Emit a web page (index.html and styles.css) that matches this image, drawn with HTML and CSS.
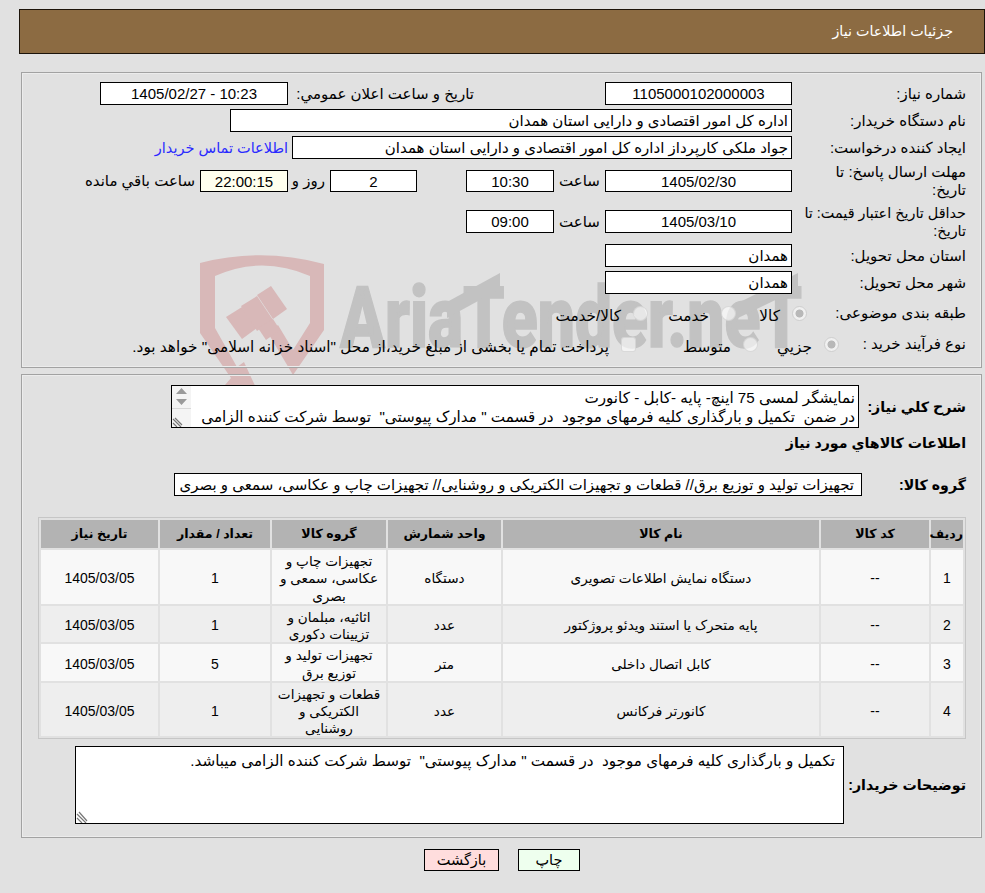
FILE: index.html
```html
<!DOCTYPE html>
<html lang="fa" dir="rtl">
<head>
<meta charset="utf-8">
<title>جزئیات اطلاعات نیاز</title>
<link rel="stylesheet" href="styles.css">
</head>
<body>
<svg class="watermark" width="985" height="893" viewBox="0 0 985 893" aria-hidden="true">
  <path class="wm-red" d="M200 263 Q262 247 324 264 L324 330 L293 375 L268 333 L278 325 L293 350 L310 323 L310 276 Q262 255 215 276 L215 328 L237 367 L244 362 L257 390 L225 385 L231 378 L200 333 Z"/>
  <polygon class="wm-red" points="226,317 242,307 257,328 242,339"/>
  <polygon class="wm-red" points="241,306 257,296 273,320 257,331"/>
  <polygon class="wm-red" points="257,295 271,286 287,309 273,319"/>
  <polygon class="wm-red" points="258,328 273,319 280,330 266,340"/>
  <text class="wm-text" x="340" y="347" textLength="462" lengthAdjust="spacingAndGlyphs" direction="ltr">AriaTender.neT</text>
  <polygon class="wm-gray" points="447,302 500,273 500,289 447,318"/>
  <polygon class="wm-gray" points="738,303 798,273 798,289 738,318"/>
</svg>

<header class="page-title">جزئیات اطلاعات نیاز</header>

<section class="panel panel-info">
  <div class="row r-23">
    <span class="label w-174">شماره نیاز:</span>
    <span class="field w-187 center">1105000102000003</span>
    <span class="text ms-131 w-186">تاریخ و ساعت اعلان عمومي:</span>
    <span class="field w-188 center">10:23 - 1405/02/27</span>
  </div>
  <div class="row r-23">
    <span class="label w-174">نام دستگاه خریدار:</span>
    <span class="field w-562">اداره کل امور اقتصادی و دارایی استان همدان</span>
  </div>
  <div class="row r-23">
    <span class="label w-174">ایجاد کننده درخواست:</span>
    <span class="field w-500">جواد ملکی کارپرداز اداره کل امور اقتصادی و دارایی استان همدان</span>
    <a class="link" href="#">اطلاعات تماس خریدار</a>
  </div>
  <div class="row r-36">
    <span class="label w-174">مهلت ارسال پاسخ: تا<br>تاریخ:</span>
    <span class="field w-187 h-22 center">1405/02/30</span>
    <span class="text w-51 center">ساعت</span>
    <span class="field w-88 h-22 center">10:30</span>
    <span class="field w-87 h-22 center ms-49">2</span>
    <span class="text ms-5 w-37">روز و</span>
    <span class="field w-88 h-22 center timer">22:00:15</span>
    <span class="text ms-5">ساعت باقي مانده</span>
  </div>
  <div class="row r-37">
    <span class="label label-tight w-174">حداقل تاریخ اعتبار قیمت: تا<br>تاریخ:</span>
    <span class="field w-187 center">1405/03/10</span>
    <span class="text w-51 center">ساعت</span>
    <span class="field w-88 center">09:00</span>
  </div>
  <div class="row r-23">
    <span class="label w-174">استان محل تحویل:</span>
    <span class="field w-187">همدان</span>
  </div>
  <div class="row r-23">
    <span class="label w-174">شهر محل تحویل:</span>
    <span class="field w-187">همدان</span>
  </div>
  <div class="row r-30">
    <span class="label w-159">طبقه بندی موضوعی:</span>
    <label class="option w-71"><input class="radio" type="radio" name="cat" disabled checked><span class="opt-text">کالا</span></label>
    <label class="option w-88"><input class="radio" type="radio" name="cat" disabled><span class="opt-text">خدمت</span></label>
    <label class="option"><input class="radio" type="radio" name="cat" disabled><span class="opt-text">کالا/خدمت</span></label>
  </div>
  <div class="row r-24">
    <span class="label w-127">نوع فرآیند خرید :</span>
    <label class="option w-81"><input class="radio" type="radio" name="kind" disabled checked><span class="opt-text">جزيي</span></label>
    <label class="option w-122"><input class="radio" type="radio" name="kind" disabled><span class="opt-text">متوسط</span></label>
    <label class="option"><input class="check" type="checkbox" disabled><span class="opt-text">پرداخت تمام یا بخشی از مبلغ خرید،از محل "اسناد خزانه اسلامی" خواهد بود.</span></label>
  </div>
</section>

<section class="panel panel-goods">
  <div class="row-desc">
    <span class="label-bold w-107">شرح كلي نياز:</span>
    <div class="area area-short">
      <div class="area-line">نمایشگر لمسی 75 اینچ- پایه -کابل - کانورت</div>
      <div class="area-line">در ضمن  تکمیل و بارگذاری کلیه فرمهای موجود  در قسمت " مدارک پیوستی"  توسط شرکت کننده الزامی</div>
      <svg class="scrollbar" width="19" height="41" viewBox="0 0 19 41" aria-hidden="true">
        <rect width="19" height="41" fill="#f4f4f4"/>
        <path d="M9.5 2 L15 8 H4 Z M4 13 H15 L9.5 19 Z" fill="#9a9a9a"/>
        <path d="M0 22.5 H19" stroke="#d8d8d8"/>
        <path d="M1 33 L9 41 M1 37 L5 41 M3 32 L10 39" stroke="#777" stroke-width="1.2" fill="none"/>
      </svg>
    </div>
  </div>
  <h2 class="goods-title">اطلاعات كالاهاي مورد نياز</h2>
  <div class="row-group">
    <span class="label-bold w-104">گروه کالا:</span>
    <span class="field w-688 group-value">تجهیزات تولید و توزیع برق// قطعات و تجهیزات الکتریکی و روشنایی// تجهیزات چاپ و عکاسی، سمعی و بصری</span>
  </div>
  <table class="goods">
    <colgroup>
      <col class="c-32"><col class="c-108"><col class="c-316"><col class="c-113"><col class="c-114"><col class="c-110"><col class="c-117">
    </colgroup>
    <thead>
      <tr class="tr-head"><th>ردیف</th><th>کد کالا</th><th>نام کالا</th><th>واحد شمارش</th><th>گروه کالا</th><th>تعداد / مقدار</th><th>تاریخ نیاز</th></tr>
    </thead>
    <tbody>
      <tr class="tr-54 odd"><td><div class="cell num">1</div></td><td><div class="cell num">--</div></td><td><div class="cell">دستگاه نمایش اطلاعات تصویری</div></td><td><div class="cell">دستگاه</div></td><td><div class="cell">تجهیزات چاپ و<br>عکاسی، سمعی و<br>بصری</div></td><td><div class="cell num">1</div></td><td><div class="cell num">1405/03/05</div></td></tr>
      <tr class="tr-36 even"><td><div class="cell num">2</div></td><td><div class="cell num">--</div></td><td><div class="cell">پایه متحرک یا استند ویدئو پروژکتور</div></td><td><div class="cell">عدد</div></td><td><div class="cell">اثاثیه، مبلمان و<br>تزیینات دکوری</div></td><td><div class="cell num">1</div></td><td><div class="cell num">1405/03/05</div></td></tr>
      <tr class="tr-37 odd"><td><div class="cell num">3</div></td><td><div class="cell num">--</div></td><td><div class="cell">کابل اتصال داخلی</div></td><td><div class="cell">متر</div></td><td><div class="cell">تجهیزات تولید و<br>توزیع برق</div></td><td><div class="cell num">5</div></td><td><div class="cell num">1405/03/05</div></td></tr>
      <tr class="tr-53 even"><td><div class="cell num">4</div></td><td><div class="cell num">--</div></td><td><div class="cell">کانورتر فرکانس</div></td><td><div class="cell">عدد</div></td><td><div class="cell">قطعات و تجهیزات<br>الکتریکی و<br>روشنایی</div></td><td><div class="cell num">1</div></td><td><div class="cell num">1405/03/05</div></td></tr>
    </tbody>
  </table>
  <div class="row-note">
    <span class="label-bold w-122">توضیحات خریدار:</span>
    <div class="area area-tall">
      <div class="area-line">تکمیل و بارگذاری کلیه فرمهای موجود  در قسمت " مدارک پیوستی"  توسط شرکت کننده الزامی میباشد.</div>
      <svg class="grip" width="12" height="12" viewBox="0 0 12 12" aria-hidden="true">
        <path d="M1 3 L10 12 M1 7 L6 12 M3 1 L11 10" stroke="#777" stroke-width="1.2" fill="none"/>
      </svg>
    </div>
  </div>
</section>

<div class="actions">
  <button class="btn btn-back" type="button">بازگشت</button>
  <button class="btn btn-print" type="button">چاپ</button>
</div>
</body>
</html>
```

FILE: styles.css
```css
html, body { margin: 0; padding: 0; }
body {
  background: #e1e1e1;
  color: #000;
  font: 15px/18px "Liberation Sans", "DejaVu Sans", sans-serif;
  height: 893px;
  overflow: hidden;
  position: relative;
  padding-top: 9px;
  box-sizing: border-box;
}
.watermark { position: absolute; left: 0; top: 0; z-index: -1; }
.wm-red { fill: #d8b8b8; }
.wm-gray { fill: #c2c2c2; }
.wm-text { fill: #c2c2c2; stroke: #c2c2c2; stroke-width: 1.5px; font: 900 86px "Roboto", sans-serif; }

.page-title {
  box-sizing: border-box;
  height: 45px;
  margin-left: 19px;
  padding: 0 31px 0 0;
  background: #8c6b42;
  border: 1px solid #1c140a;
  color: #fff;
  font-size: 14.3px;
  line-height: 43px;
}

.panel {
  box-sizing: border-box;
  margin: 0 3px 0 21px;
  padding-right: 15px;
  border: 1px solid #a2a2a2;
  box-shadow: inset 0 0 0 1px #ececec;
}
.panel-info { height: 296px; margin-top: 18px; padding-top: 9px; display: flex; flex-direction: column; gap: 4px; }
.panel-goods { height: 464px; margin-top: 6px; padding-top: 10px; }

.row { display: flex; align-items: center; }
.r-23 { height: 23px; }
.r-24 { height: 24px; }
.r-30 { height: 30px; }
.r-36 { height: 36px; }
.r-37 { height: 37px; }

.label, .label-bold { flex: none; box-sizing: border-box; }
.label-tight { font-size: 14.4px; white-space: nowrap; }
.label-bold { font-size: 14.2px; font-weight: 700; }
.text { flex: none; }
.link { color: #2a2aff; font-size: 14.5px; text-decoration: none; margin-right: 4px; }

.field {
  flex: none;
  box-sizing: border-box;
  height: 23px;
  padding: 0 3px;
  background: #fff;
  border: 1px solid #000;
  line-height: 21px;
  white-space: nowrap;
  overflow: hidden;
}
.center { text-align: center; }
.h-22 { height: 22px; }
.timer { background: #ffffee; }

.w-37 { width: 37px; }
.w-51 { width: 51px; }
.w-71 { width: 71px; }
.w-81 { width: 81px; }
.w-87 { width: 87px; }
.w-88 { width: 88px; }
.w-104 { width: 104px; }
.w-107 { width: 107px; }
.w-122 { width: 122px; }
.w-127 { width: 127px; }
.w-159 { width: 159px; }
.w-174 { width: 174px; }
.w-186 { width: 186px; }
.w-187 { width: 187px; }
.w-188 { width: 188px; }
.w-500 { width: 500px; }
.w-562 { width: 562px; }
.w-688 { width: 688px; }
.ms-5 { margin-right: 5px; }
.ms-49 { margin-right: 49px; }
.ms-131 { margin-right: 131px; }

.option { flex: none; display: flex; align-items: center; white-space: nowrap; }
.opt-text { margin-right: 12px; padding-top: 6px; font-size: 15.3px; }
.radio, .check {
  appearance: none;
  flex: none;
  box-sizing: border-box;
  width: 15px;
  height: 15px;
  margin: 0;
  background: rgba(255, 255, 255, .6);
  border: 1px solid rgba(205, 205, 205, .7);
}
.radio { border-radius: 50%; }
.check { border-radius: 3px; }
.radio:checked {
  background: radial-gradient(circle, #b8b8b8 0 3.6px, #f0f0f0 4.4px);
  border-color: #cfcfcf;
}

.row-desc, .row-group, .row-note { display: flex; align-items: center; }
.area {
  position: relative;
  flex: none;
  box-sizing: border-box;
  background: #fff;
  border: 1px solid #000;
  overflow: hidden;
  font-size: 15.2px;
}
.area-short { width: 688px; height: 43px; padding: 2px 3px 0 0; }
.area-tall { width: 769px; height: 78px; padding: 4px 8px 0 0; }
.area-line { white-space: pre; line-height: 19px; }
.scrollbar { position: absolute; left: 0; top: 0; }
.grip { position: absolute; left: 0; bottom: 0; }

.goods-title { margin: 5px 0 0; height: 20px; font-size: 14.2px; line-height: 20px; font-weight: 700; }
.row-group { margin-top: 20px; }
.group-value { padding-right: 7px; }

.goods {
  table-layout: fixed;
  width: 928px;
  margin-top: 21px;
  border: 1px solid #c6c6c6;
  border-collapse: separate;
  border-spacing: 2px;
  font-size: 13.6px;
  line-height: 17.3px;
}
.c-32 { width: 32px; }
.c-108 { width: 108px; }
.c-316 { width: 316px; }
.c-113 { width: 113px; }
.c-114 { width: 114px; }
.c-110 { width: 110px; }
.c-117 { width: 117px; }
.goods th, .goods td { padding: 0; text-align: center; vertical-align: middle; }
.goods th { background: #b3b3b3; font-size: 12.6px; font-weight: 700; white-space: nowrap; padding-top: 2px; box-sizing: border-box; }
.cell { margin: 2px 0 -2px; }
.num { font-size: 14px; }
.tr-head { height: 28px; }
.tr-54 { height: 54px; }
.tr-53 { height: 53px; }
.tr-37 { height: 37px; }
.tr-36 { height: 36px; }
.odd td { background: #f8f8f8; }
.even td { background: #eeeeee; }

.row-note { margin-top: 7px; }

.actions { display: flex; direction: ltr; gap: 19px; margin-top: 11px; padding-left: 424px; }
.btn {
  box-sizing: border-box;
  height: 22px;
  padding: 0;
  border: 1px solid #000;
  font: inherit;
  font-size: 14.5px;
  line-height: 20px;
  color: #000;
}
.btn-back { width: 75px; background: #ffdddd; }
.btn-print { width: 62px; background: #eeffee; }
```
